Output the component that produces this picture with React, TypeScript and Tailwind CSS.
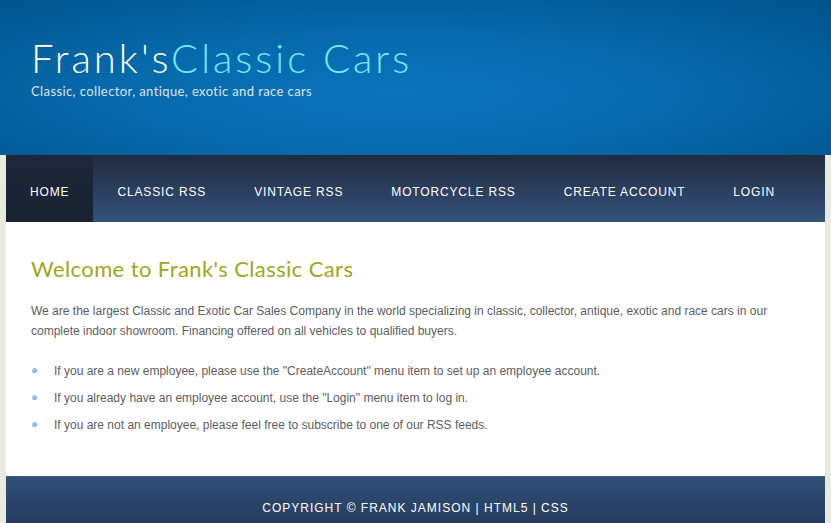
import React from "react";

const navItems = ["Home", "Classic RSS", "Vintage RSS", "Motorcycle RSS", "Create Account", "Login"];

const bullets = [
  'If you are a new employee, please use the "CreateAccount" menu item to set up an employee account.',
  'If you already have an employee account, use the "Login" menu item to log in.',
  "If you are not an employee, please feel free to subscribe to one of our RSS feeds.",
];

export default function App() {
  return (
    <div className="min-h-[523px] bg-[#e9e9dc] font-['Liberation_Sans',sans-serif]">
      {/* header */}
      <header className="h-[155px] bg-[radial-gradient(ellipse_at_48%_60%,#0b74bd_0%,#066aac_45%,#01538c_100%)] px-[31px] pt-[34px]">
        <h1 className="whitespace-nowrap font-['Lato',sans-serif] text-[40px] font-light leading-[48px] tracking-[3px] text-white">
          Frank's<span className="text-[#72e8f6]">Classic Cars</span>
        </h1>
        <p className="mt-[2px] font-['Lato',sans-serif] text-[13px] leading-[14px] tracking-[0.4px] text-[#dce6ee]">
          Classic, collector, antique, exotic and race cars
        </p>
      </header>

      <div className="mx-[6px]">
        {/* menu */}
        <nav className="flex h-[67px] bg-gradient-to-b from-[#212b40] to-[#34527c]">
          {navItems.map((item, i) => (
            <a
              key={item}
              href="#"
              className={`flex shrink-0 items-center whitespace-nowrap px-[24px] pt-[6px] text-[12px] uppercase tracking-[0.85px] text-white ${
                i === 0 ? "bg-gradient-to-b from-[#1e283a] to-[#1a2232]" : ""
              }`}
            >
              {item}
            </a>
          ))}
        </nav>

        {/* content */}
        <main className="h-[254px] bg-white px-[25px] pt-[34px]">
          <h2 className="font-['Lato',sans-serif] text-[22px] leading-[26px] tracking-[0.4px] text-[#a0a61a]">
            Welcome to Frank's Classic Cars
          </h2>
          <p className="mt-[19px] text-[12px] leading-[20px] text-[#5d5d5d]">
            We are the largest Classic and Exotic Car Sales Company in the world specializing in classic, collector,
            antique, exotic and race cars in our complete indoor showroom. Financing offered on all vehicles to qualified
            buyers.
          </p>
          <ul className="mt-[16px]">
            {bullets.map((b) => (
              <li key={b} className="flex h-[27px] items-center text-[12px] text-[#5d5d5d]">
                <span className="ml-[1px] mr-[17px] h-[5px] w-[5px] rounded-full bg-[radial-gradient(circle_at_35%_35%,#b9d4f0,#5b8fd0)]" />
                {b}
              </li>
            ))}
          </ul>
        </main>

        {/* footer */}
        <footer className="h-[47px] border-t border-[#3d5e86] bg-gradient-to-b from-[#30507a] to-[#263c5d] pt-[22px] text-center text-[12px] uppercase tracking-[1px] text-white">
          Copyright © Frank Jamison | HTML5 | CSS
        </footer>
      </div>
    </div>
  );
}
